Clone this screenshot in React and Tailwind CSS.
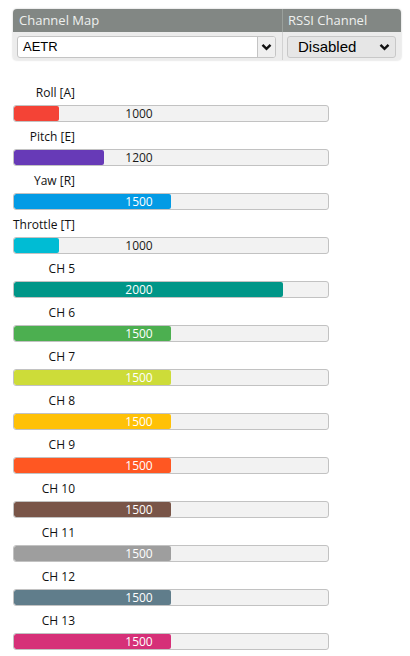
import React from "react";

const channels = [
  { name: "Roll [A]", value: 1000, color: "bg-[#f44336]" },
  { name: "Pitch [E]", value: 1200, color: "bg-[#673ab7]" },
  { name: "Yaw [R]", value: 1500, color: "bg-[#039be5]" },
  { name: "Throttle [T]", value: 1000, color: "bg-[#00bcd4]" },
  { name: "CH 5", value: 2000, color: "bg-[#009688]" },
  { name: "CH 6", value: 1500, color: "bg-[#4caf50]" },
  { name: "CH 7", value: 1500, color: "bg-[#cddc39]" },
  { name: "CH 8", value: 1500, color: "bg-[#ffc107]" },
  { name: "CH 9", value: 1500, color: "bg-[#ff5722]" },
  { name: "CH 10", value: 1500, color: "bg-[#795548]" },
  { name: "CH 11", value: 1500, color: "bg-[#9e9e9e]" },
  { name: "CH 12", value: 1500, color: "bg-[#607d8b]" },
  { name: "CH 13", value: 1500, color: "bg-[#d63078]" },
];

function Chevron() {
  return (
    <svg width="11" height="8" viewBox="0 0 11 8" aria-hidden="true">
      <path d="M1.5 1.8 L5.5 5.8 L9.5 1.8" fill="none" stroke="#111" strokeWidth="2.4" />
    </svg>
  );
}

export default function App() {
  return (
    <div className="w-[410px] h-[656px] bg-white font-['Open_Sans',sans-serif] overflow-hidden flex flex-col">
      <div className="ml-[13px] mt-[9px] w-[388px] rounded-[4px] overflow-hidden shadow-[0_0_2px_rgba(0,0,0,0.25)]">
        <div className="grid grid-cols-[270px_118px] bg-[#828784] h-[23px] text-[13px] leading-[23px] text-[#eef0ee]">
          <div className="pl-[6px] border-r border-[#9aa09c]">Channel Map</div>
          <div className="pl-[5px]">RSSI Channel</div>
        </div>
        <div className="grid grid-cols-[270px_118px] bg-[#ececec] h-[29px]">
          <div className="pl-[4px] pr-[6px] pt-[4px] border-r border-[#d2d2d2]">
            <div className="h-[22px] flex rounded-[3px] border border-[#c4c4c4] bg-white overflow-hidden">
              <div className="flex-1 pl-[5px] text-[13px] leading-[20px] text-black font-['Liberation_Sans',sans-serif]">AETR</div>
              <div className="w-[18px] border-l border-[#c4c4c4] bg-[#efefef] flex items-center justify-center">
                <Chevron />
              </div>
            </div>
          </div>
          <div className="pl-[4px] pr-[5px] pt-[4px]">
            <div className="h-[22px] flex items-center rounded-[3px] border border-[#c8c8c8] bg-[#e6e6e6] pl-[10px] pr-[5px]">
              <div className="flex-1 text-[15px] leading-[20px] text-black font-['Liberation_Sans',sans-serif]">Disabled</div>
              <Chevron />
            </div>
          </div>
        </div>
      </div>

      <div className="mt-[24px] ml-[13px] flex flex-col">
        {channels.map((c) => {
          const pct = ((c.value - 800) / 1400) * 100;
          const white = c.value >= 1500;
          return (
            <div key={c.name} className="mb-[6px]">
              <div className="w-[62px] h-[18px] mb-[3px] text-right text-[12px] leading-[18px] font-medium text-[#111] whitespace-nowrap">
                {c.name}
              </div>
              <div className="relative w-[316px] h-[17px] rounded-[3px] border border-[#c2c2c2] bg-[#f2f2f2] overflow-hidden">
                <div className={`h-full rounded-[2px] ${c.color}`} style={{ width: `${pct}%` }} />
                <div
                  className={`absolute left-0 top-0 w-[250px] h-full text-center text-[12px] leading-[15px] font-medium ${
                    white ? "text-white" : "text-[#1a1a1a]"
                  }`}
                >
                  {c.value}
                </div>
              </div>
            </div>
          );
        })}
      </div>
      <div className="flex-1 bg-[#f7f7f7]" />
    </div>
  );
}
